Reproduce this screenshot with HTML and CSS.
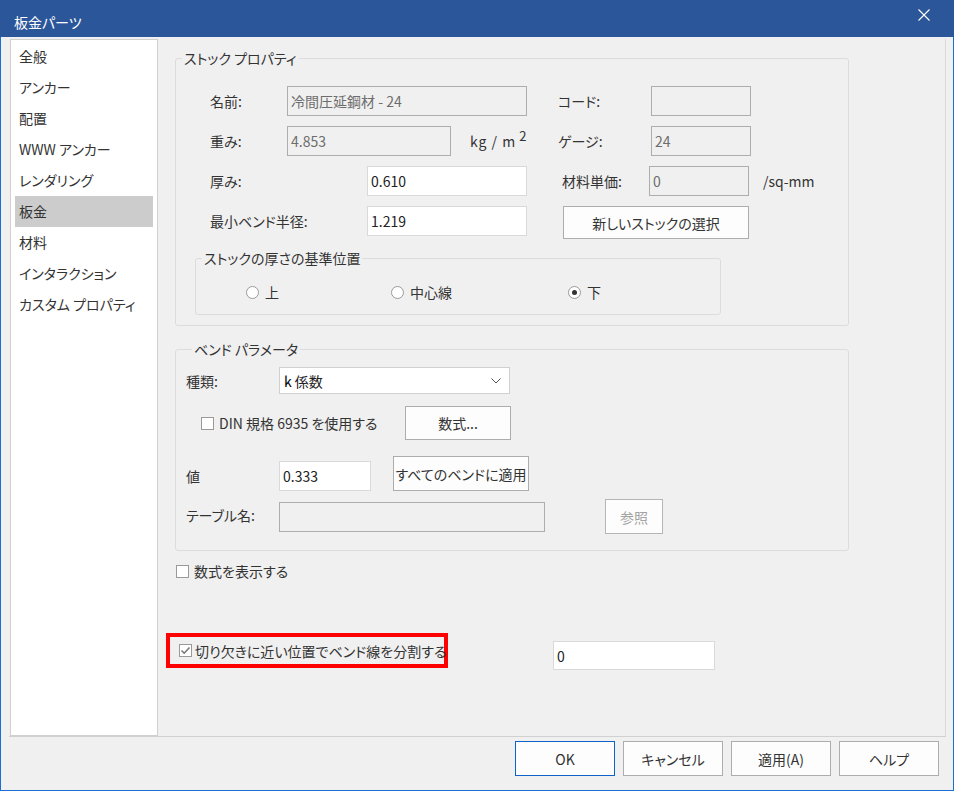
FILE: index.html
```html
<!DOCTYPE html>
<html lang="ja">
  <head>
    <meta charset="UTF-8" />
    <title>板金パーツ</title>
    <link rel="stylesheet" href="styles.css">
  </head>
  <body>
    <div class="dialog">
      <!-- Title bar -->
      <div class="titlebar">
        <span class="title">板金パーツ</span>
        <span class="close">
          <svg width="12" height="12" viewBox="0 0 12 12"><path d="M0.5 0.5 L11.5 11.5 M11.5 0.5 L0.5 11.5" stroke="#fff" stroke-width="1.1" fill="none"/></svg>
        </span>
      </div>

      <div class="frame">
        <div class="main">
          <!-- Left: page list -->
          <ul class="nav">
            <li>全般</li>
            <li>アンカー</li>
            <li>配置</li>
            <li>WWW アンカー</li>
            <li>レンダリング</li>
            <li class="active">板金</li>
            <li>材料</li>
            <li>インタラクション</li>
            <li>カスタム プロパティ</li>
          </ul>

          <!-- Right: property page -->
          <div class="page">
            <fieldset class="group stock">
              <legend>ストック プロパティ</legend>
              <div class="stock-rows">
                <div class="row">
                  <div class="cell-left">
                    <span class="lbl w77">名前:</span>
                    <input class="field disabled w240" value="冷間圧延鋼材 - 24" disabled>
                  </div>
                  <div class="cell-right">
                    <span class="lbl w93">コード:</span>
                    <input class="field disabled w100" value="" disabled>
                  </div>
                </div>
                <div class="row">
                  <div class="cell-left">
                    <span class="lbl w77">重み:</span>
                    <input class="field disabled w164" value="4.853" disabled>
                    <span class="unit">kg / m<sup>2</sup></span>
                  </div>
                  <div class="cell-right">
                    <span class="lbl w93">ゲージ:</span>
                    <input class="field disabled w100" value="24" disabled>
                  </div>
                </div>
                <div class="row">
                  <div class="cell-left">
                    <span class="lbl w157">厚み:</span>
                    <input class="field w160" value="0.610">
                  </div>
                  <div class="cell-right shift">
                    <span class="lbl w87">材料単価:</span>
                    <input class="field disabled w100" value="0" disabled>
                    <span class="unit-sq">/sq-mm</span>
                  </div>
                </div>
                <div class="row tall">
                  <div class="cell-left">
                    <span class="lbl w157">最小ベンド半径:</span>
                    <input class="field w160" value="1.219">
                  </div>
                  <div class="cell-right">
                    <button class="btn stock-btn">新しいストックの選択</button>
                  </div>
                </div>
              </div>

              <fieldset class="group base">
                <legend>ストックの厚さの基準位置</legend>
                <div class="radios">
                  <label class="opt o1"><span class="radio"></span>上</label>
                  <label class="opt o2"><span class="radio"></span>中心線</label>
                  <label class="opt"><span class="radio on"></span>下</label>
                </div>
              </fieldset>
            </fieldset>

            <fieldset class="group bend">
              <legend>ベンド パラメータ</legend>
              <div class="brow r1">
                <span class="lbl w93">種類:</span>
                <div class="select">
                  <span><span class="k">k</span> 係数</span>
                  <svg width="10" height="6" viewBox="0 0 10 6"><path d="M0.5 0.5 L5 5 L9.5 0.5" stroke="#555" fill="none"/></svg>
                </div>
              </div>
              <div class="brow r2">
                <label class="check din"><span class="box"></span>DIN 規格 6935 を使用する</label>
                <button class="btn formula-btn">数式...</button>
              </div>
              <div class="brow r3">
                <span class="lbl w93">値</span>
                <input class="field white w92" value="0.333">
                <button class="btn apply-all">すべてのベンドに適用</button>
              </div>
              <div class="brow r4">
                <span class="lbl w93">テーブル名:</span>
                <input class="field disabled w266" value="" disabled>
                <button class="btn ref-btn" disabled>参照</button>
              </div>
            </fieldset>

            <label class="check show-formula"><span class="box"></span>数式を表示する</label>

            <div class="split-row">
              <div class="highlight">
                <label class="check">
                  <span class="box checked">
                    <svg width="11" height="11" viewBox="0 0 11 11"><path d="M1.5 5.5 L4.2 8.2 L9.5 2.5" stroke="#777" stroke-width="1.6" fill="none"/></svg>
                  </span>切り欠きに近い位置でベンド線を分割する
                </label>
              </div>
              <input class="field white split-val" value="0">
            </div>
          </div>
        </div>

        <!-- Bottom buttons -->
        <div class="footer">
          <button class="btn foot default">OK</button>
          <button class="btn foot">キャンセル</button>
          <button class="btn foot">適用(A)</button>
          <button class="btn foot">ヘルプ</button>
        </div>
      </div>
    </div>
  </body>
</html>
```

FILE: styles.css
```css
/* ============ Variables ============ */
:root {
  --title: #2b579a;
  --frame: #1c6ed4;
  --bg: #f0f0f0;
  --text: #333333;
  --muted: #6d6d6d;
  --group-line: #dcdcdc;
  --field-border: #adadad;
  --field-light: #d9d9d9;
}

* {
  box-sizing: border-box;
}

html,
body {
  margin: 0;
}

body {
  font-family: "Noto Sans CJK JP", "Noto Sans", sans-serif;
  font-size: 14px;
  line-height: 18px;
  font-feature-settings: "palt";
  color: var(--text);
  background: var(--bg);
}

input,
button {
  font: inherit;
  font-feature-settings: "palt";
  color: inherit;
  margin: 0;
}

/* ============ Window ============ */
.dialog {
  width: 954px;
  height: 791px;
  display: flex;
  flex-direction: column;
}

.titlebar {
  flex: none;
  height: 37px;
  background: var(--title);
  color: #fff;
  display: flex;
  align-items: flex-start;
  justify-content: space-between;
  padding: 13px 24px 0 14px;
}
.close {
  margin-top: -4px;
  display: flex;
}

.frame {
  flex: 1;
  display: flex;
  flex-direction: column;
  border: 1px solid var(--frame);
  border-top: 0;
}

.main {
  flex: 1;
  display: flex;
  padding: 2px 7px 0 9px;
  min-height: 0;
}

/* ============ Page list ============ */
.nav {
  width: 148px;
  margin: 0;
  padding: 1px 4px;
  list-style: none;
  background: #fff;
  border: 1px solid #d0d0d0;
}
.nav li {
  height: 31px;
  line-height: 31px;
  padding-left: 4px;
  white-space: nowrap;
}
.nav li.active {
  background: #cccccc;
}

/* ============ Property page ============ */
.page {
  flex: 1;
  border-right: 1px solid var(--field-light);
  padding: 11px 0 0 17px;
}

.group {
  margin: 0;
  padding: 0;
  min-width: 0;
  border: 1px solid var(--group-line);
  border-radius: 3px;
}
.group legend {
  margin-left: 6px;
  padding: 0 2px;
  line-height: 16px;
}

.stock {
  width: 674px;
  padding: 20px 0 10px;
}
.stock-rows {
  padding-left: 34px;
}

.row {
  display: flex;
  height: 30px;
  margin-bottom: 10px;
}
.row.tall {
  height: 33px;
  margin-bottom: 0;
}
.cell-left {
  width: 348px;
  flex: none;
  display: flex;
  align-items: center;
}
.cell-right {
  display: flex;
  align-items: center;
}
.cell-right.shift {
  padding-left: 4px;
}
.row.tall .cell-left {
  height: 30px;
}

.lbl {
  flex: none;
  white-space: nowrap;
}
.w77 { width: 77px; }
.w87 { width: 87px; }
.w93 { width: 93px; }
.w157 { width: 157px; }

.field {
  height: 30px;
  padding: 0 3px;
  border: 1px solid var(--field-light);
  background: #fff;
  color: #222;
  outline: none;
}
.field.disabled {
  background: var(--bg);
  border-color: var(--field-border);
  color: var(--muted);
}
.w92 { width: 92px; }
.w100 { width: 100px; }
.w160 { width: 160px; }
.w164 { width: 164px; }
.w240 { width: 240px; }
.w266 { width: 266px; }

.unit {
  margin-left: 19px;
  letter-spacing: 1px;
}
.unit sup {
  font-size: 13px;
  margin-left: 3px;
  vertical-align: 6px;
  line-height: 0;
}
.unit-sq {
  margin-left: 14px;
}

.btn {
  background: #fdfdfd;
  border: 1px solid var(--field-border);
  padding: 0;
  white-space: nowrap;
}
.stock-btn {
  width: 186px;
  height: 33px;
  margin-left: 5px;
}

/* Thickness reference */
.base {
  width: 526px;
  margin: 11px 0 0 19px;
  padding: 16px 0 12px;
}
.radios {
  display: flex;
  align-items: center;
  height: 20px;
  padding-left: 50px;
}
.opt {
  display: flex;
  align-items: center;
}
.o1 { width: 145px; }
.o2 { width: 177px; }
.radio {
  width: 13px;
  height: 13px;
  margin-right: 6px;
  border: 1px solid #9a9a9a;
  border-radius: 50%;
  background: #fff;
  display: flex;
  align-items: center;
  justify-content: center;
}
.radio.on::after {
  content: "";
  width: 5px;
  height: 5px;
  border-radius: 50%;
  background: #333;
}

/* ============ Bend parameters ============ */
.bend {
  width: 674px;
  margin-top: 15px;
  padding: 10px 0 16px 10px;
}
.brow {
  display: flex;
  align-items: center;
}
.brow .lbl {
  line-height: 30px;
}
.r1 {
  height: 27px;
}
.r2 {
  height: 34px;
  margin-top: 12px;
}
.r3 {
  height: 35px;
  margin-top: 16px;
  align-items: flex-end;
}
.r4 {
  height: 35px;
  margin-top: 8px;
}
.r4 .lbl {
  margin-top: -4px;
}

.select {
  width: 231px;
  height: 27px;
  border: 1px solid #d0d0d0;
  background: #fff;
  display: flex;
  align-items: center;
  justify-content: space-between;
  padding: 0 8px 0 4px;
  color: #222;
}
.select .k {
  color: #000;
}

.check {
  display: flex;
  align-items: center;
  white-space: nowrap;
}
.box {
  width: 13px;
  height: 13px;
  margin-right: 5px;
  border: 1px solid #9a9a9a;
  background: #fff;
  display: flex;
  align-items: center;
  justify-content: center;
  flex: none;
}
.din {
  width: 204px;
  margin-left: 15px;
}
.formula-btn {
  width: 106px;
  height: 34px;
}
.apply-all {
  width: 136px;
  height: 35px;
  margin-left: 22px;
}
.ref-btn {
  width: 58px;
  height: 35px;
  margin-left: 60px;
  color: #a3a3a3;
  border-color: #b5b5b5;
}

/* ============ Bottom options ============ */
.show-formula {
  height: 20px;
  margin: 10px 0 0 1px;
}

.split-row {
  display: flex;
  align-items: flex-start;
  margin-top: 52px;
}
.highlight {
  width: 282px;
  height: 35px;
  margin-left: -9px;
  border: 4px solid #ff0000;
  display: flex;
  align-items: center;
  padding-left: 9px;
}
.highlight .box {
  margin-right: 3px;
}
.split-val {
  width: 162px;
  height: 29px;
  margin: 8px 0 0 105px;
}

/* ============ Footer ============ */
.footer {
  flex: none;
  height: 54px;
  margin: 0 7px 0 8px;
  border-top: 1px solid #d0d0d0;
  display: flex;
  justify-content: flex-end;
  gap: 8px;
  padding: 4px 7px 0 0;
}
.foot {
  width: 100px;
  height: 35px;
}
.foot.default {
  border-color: #0f62c9;
}
```
